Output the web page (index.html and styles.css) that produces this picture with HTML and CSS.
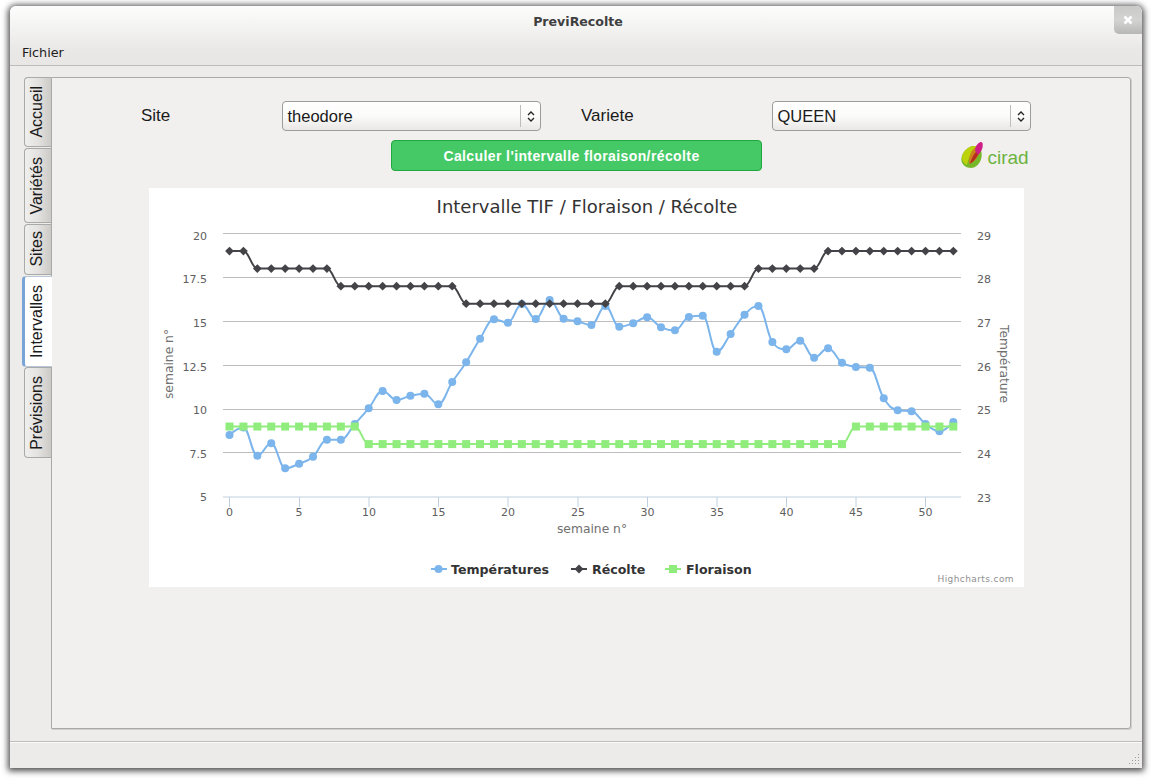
FILE: index.html
```html
<!DOCTYPE html>
<html lang="fr">
<head>
<meta charset="utf-8">
<title>PreviRecolte</title>
<link rel="stylesheet" href="styles.css">
</head>
<body>
<div class="window">
  <header class="head">
    <div class="title">PreviRecolte</div>
    <nav class="menu"><span>Fichier</span></nav>
    <button class="close" aria-label="Fermer"><svg width="12" height="12" viewBox="0 0 12 12"><path d="M2.5 2.5l7 7M9.5 2.5l-7 7" stroke="#fff" stroke-width="2.6" fill="none"/></svg></button>
  </header>
  <main class="main">
    <div class="tabs">
      <div class="tab"><span>Accueil</span></div>
      <div class="tab"><span>Variétés</span></div>
      <div class="tab tab-short"><span>Sites</span></div>
      <div class="tab active"><span>Intervalles</span></div>
      <div class="tab"><span>Prévisions</span></div>
    </div>
    <section class="panel">
      <div class="form-row">
        <label class="lbl">Site</label>
        <div class="combo"><span class="combo-text">theodore</span><span class="combo-arrow"><svg width="8" height="13" viewBox="0 0 8 13"><path d="M1 5l3-3 3 3M1 8l3 3 3-3" stroke="#222" stroke-width="1.3" fill="none"/></svg></span></div>
        <label class="lbl lbl-2">Variete</label>
        <div class="combo"><span class="combo-text">QUEEN</span><span class="combo-arrow"><svg width="8" height="13" viewBox="0 0 8 13"><path d="M1 5l3-3 3 3M1 8l3 3 3-3" stroke="#222" stroke-width="1.3" fill="none"/></svg></span></div>
      </div>
      <div class="action-row">
        <button class="calc">Calculer l'intervalle floraison/récolte</button>
        <svg class="logo" width="68" height="28" viewBox="0 0 68 28">
          <path d="M10 5.500C15 4 19 7 20.500 11C21.500 17 19 24 13 26.500C8 28 2 26 .5 20C-.5 14 4 8 10 5.500Z" fill="#76b82a"/>
          <path d="M10 5.500C13 4.500 15 5 16 6C12 10 7 17 6 24C2 22 0 18 1.500 14C3 10 6 7 10 5.500Z" fill="#bcd20a"/>
          <path d="M8 23C7 17 10 9 15 6C17 5.500 19 7 19 8C19 14 14 21 8 23Z" fill="#c9851c"/>
          <path d="M9 23C10 18 13 12 17 9C18 11 18 12 17 14C15 18 12 21 9 23Z" fill="#b5301f"/>
          <path d="M14 9C14.500 5 17 1.500 20 1C22 1 22 4 21.500 6.500C21 9 19 12 17 14C16 12 14.500 11 14 9Z" fill="#cf1d86"/>
          <text class="logo-text" x="26.500" y="23">cirad</text>
        </svg>
      </div>
      <figure class="chart">
        <svg width="875" height="399" viewBox="149 188 875 399">
          <defs>
            <marker id="m-circle" markerUnits="userSpaceOnUse" markerWidth="10" markerHeight="10" refX="5" refY="5"><circle cx="5" cy="5" r="4" fill="#7cb5ec"/></marker>
            <marker id="m-diamond" markerUnits="userSpaceOnUse" markerWidth="10" markerHeight="10" refX="5" refY="5"><path d="M5 .6L9.400 5 5 9.400 .6 5Z" fill="#434348"/></marker>
            <marker id="m-square" markerUnits="userSpaceOnUse" markerWidth="10" markerHeight="10" refX="5" refY="5"><rect x="1" y="1" width="8" height="8" fill="#90ed7d"/></marker>
          </defs>
          <rect class="bg" x="149" y="188" width="875" height="399"/>
          <text class="c-title" x="587" y="213">Intervalle TIF / Floraison / Récolte</text>
          <g class="grid">
            <path d="M223 233.500H961M223 277.500H961M223 321.500H961M223 365.500H961M223 409.500H961M223 452.500H961"/>
          </g>
          <path class="axis" d="M223 497H961M229.500 497v10M299.500 497v10M369 497v10M438.500 497v10M508 497v10M578 497v10M647.500 497v10M717 497v10M786.500 497v10M856 497v10M925.500 497v10"/>
          <g class="lab lab-l">
            <text x="207" y="240">20</text><text x="207" y="283">17.5</text><text x="207" y="327">15</text><text x="207" y="371">12.5</text><text x="207" y="414">10</text><text x="207" y="458">7.5</text><text x="207" y="501">5</text>
          </g>
          <g class="lab lab-r">
            <text x="977" y="240">29</text><text x="977" y="283">28</text><text x="977" y="327">27</text><text x="977" y="371">26</text><text x="977" y="414">25</text><text x="977" y="458">24</text><text x="977" y="502">23</text>
          </g>
          <g class="lab lab-x">
            <text x="229.500" y="516">0</text><text x="299" y="516">5</text><text x="369" y="516">10</text><text x="438.500" y="516">15</text><text x="508" y="516">20</text><text x="578" y="516">25</text><text x="647.500" y="516">30</text><text x="717" y="516">35</text><text x="786.500" y="516">40</text><text x="856" y="516">45</text><text x="925.500" y="516">50</text>
          </g>
          <text class="ax-t" x="592" y="533">semaine n°</text>
          <text class="ax-t" transform="translate(173 364) rotate(-90)">semaine n°</text>
          <text class="ax-t" transform="translate(1000 364) rotate(90)">Température</text>
          <path id="s-temp" class="line" stroke="#7cb5ec" marker-start="url(#m-circle)" marker-mid="url(#m-circle)" marker-end="url(#m-circle)"/>
          <path id="s-rec" class="line" stroke="#434348" marker-start="url(#m-diamond)" marker-mid="url(#m-diamond)" marker-end="url(#m-diamond)"/>
          <path id="s-flo" class="line" stroke="#90ed7d" marker-start="url(#m-square)" marker-mid="url(#m-square)" marker-end="url(#m-square)"/>
          <path class="leg" stroke="#7cb5ec" d="M431 569h16"/><circle cx="438.500" cy="569" r="4" fill="#7cb5ec"/>
          <text class="leg-t" x="451" y="574">Températures</text>
          <path class="leg" stroke="#434348" d="M571 569h16"/><path d="M579 564.500l4.500 4.500-4.500 4.500-4.500-4.500Z" fill="#434348"/>
          <text class="leg-t" x="592" y="574">Récolte</text>
          <path class="leg" stroke="#90ed7d" d="M665 569h16"/><rect x="669" y="565" width="8" height="8" fill="#90ed7d"/>
          <text class="leg-t" x="686" y="574">Floraison</text>
          <text class="credit" x="1014" y="582">Highcharts.com</text>
        </svg>
      </figure>
    </section>
  </main>
  <footer class="status">
    <svg width="12" height="12" viewBox="0 0 12 12" class="grip"><path d="M10 1h1v1h-1zM7 4h1v1H7zM10 4h1v1h-1zM4 7h1v1H4zM7 7h1v1H7zM10 7h1v1h-1zM1 10h1v1H1zM4 10h1v1H4zM7 10h1v1H7zM10 10h1v1h-1z" fill="#9a9a98"/></svg>
  </footer>
</div>
<script src="chart.js"></script>
</body>
</html>
```

FILE: styles.css
```css
* { box-sizing: border-box; }
html, body { margin: 0; height: 100%; background: #fff; overflow: hidden; }
body { padding: 6px 9px 11px 10px; font-family: "Liberation Sans", Arial, sans-serif; }

.window {
  position: relative;
  width: 1132px;
  height: 762px;
  display: flex;
  flex-direction: column;
  background: #edecea;
  border-radius: 6px 6px 0 0;
  box-shadow: 0 1px 6px 2px rgba(0, 0, 0, .7);
}

.head {
  height: 60px;
  flex: none;
  background: linear-gradient(#fdfdfd, #e9e8e6 75%, #e8e7e5);
  border-bottom: 1px solid #bdbdbb;
  border-radius: 6px 6px 0 0;
  font-family: "DejaVu Sans", sans-serif;
}
.title {
  height: 32px;
  padding: 8px 0 0 4px;
  text-align: center;
  font-size: 12.600px;
  line-height: 15px;
  font-weight: bold;
  color: #3f3f3f;
}
.menu { padding: 7px 0 0 12px; font-size: 12.800px; line-height: 15px; color: #1c1c1c; }
.close {
  position: absolute;
  top: 0;
  right: 0;
  width: 28px;
  height: 28px;
  padding: 0;
  border: 0;
  border-radius: 0 6px 0 5px;
  background: linear-gradient(#c9c9c8, #d3d3d2 50%, #b7b7b6);
  display: flex;
  align-items: center;
  justify-content: center;
}

.main {
  flex: 1;
  display: flex;
  padding: 11px 11px 12px 12px;
  min-height: 0;
  border-bottom: 1px solid #bdbdbb;
}

.tabs { width: 29px; flex: none; display: flex; flex-direction: column; gap: 1px; position: relative; z-index: 1; }
.tab {
  margin-left: 2px;
  padding: 8px 2px 8px 0;
  display: flex;
  justify-content: center;
  background: linear-gradient(90deg, #efefed, #e3e2e0 50%, #cbcac6);
  border: 1px solid #a9a9a7;
  border-right: 0;
  border-radius: 4px 0 0 4px;
  font-size: 16px;
  color: #1a1a1a;
}
.tab-short { padding-top: 6px; padding-bottom: 7px; }
.tab span { writing-mode: vertical-rl; transform: rotate(180deg); line-height: 24px; }
.tab.active {
  margin: 0 -1px -1px 0;
  padding-right: 4px;
  background: #fff;
  border-color: #7aa3d6;
  border-left-width: 3px;
  border-top-color: #b8c7da;
  border-bottom-color: #b8c7da;
}

.panel {
  flex: 1;
  min-width: 0;
  background: #f1f0ee;
  border: 1px solid #a9a9a7;
  border-radius: 0 3px 3px 0;
  box-shadow: 1px 1px 0 #d0cfcd;
}

.form-row {
  margin: 23px 0 0 89px;
  display: grid;
  grid-template-columns: 141px 259px 231px 259px;
  height: 29px;
}
.lbl { font-size: 17px; line-height: 30px; color: #1a1a1a; }
.lbl-2 { padding-left: 40px; }
.combo {
  display: flex;
  align-items: center;
  border: 1px solid #9c9c9a;
  border-radius: 4px;
  background: linear-gradient(#fff, #fbfbfa 50%, #e9e8e6);
  font-size: 16.500px;
  color: #1a1a1a;
}
.combo-text { flex: 1; padding: 1px 0 0 4.500px; }
.combo-arrow {
  width: 20px;
  height: 22px;
  border-left: 1px solid #bdbdbb;
  display: flex;
  align-items: center;
  justify-content: center;
}

.action-row { margin: 10px 0 0 339px; display: flex; align-items: flex-start; height: 31px; }
.calc {
  width: 371px;
  height: 31px;
  padding: 0 10px 0 0;
  border: 1px solid #1fa83f;
  border-radius: 4px;
  background: #45c967;
  color: #fff;
  font: bold 14px "Liberation Sans", Arial, sans-serif;
  letter-spacing: .4px;
}
.logo { margin: 1px 0 0 199px; flex: none; overflow: visible; }
.logo-text { font: 19px "Liberation Sans", Arial, sans-serif; fill: #6cb33f; }

.chart { margin: 17px 0 0 97px; width: 875px; height: 399px; }
.chart svg { display: block; }
.bg { fill: #fff; }
.grid path { stroke: #bdbdbd; stroke-width: 1; fill: none; }
.axis { stroke: #c0d0e0; stroke-width: 1; fill: none; }
.c-title, .lab, .ax-t, .leg-t, .credit { font-family: "DejaVu Sans", sans-serif; }
.c-title { font-size: 18px; fill: #333; text-anchor: middle; }
.lab { font-size: 11px; fill: #606060; }
.lab-l { text-anchor: end; }
.lab-x { text-anchor: middle; }
.ax-t { font-size: 12.300px; fill: #707070; text-anchor: middle; }
.line { fill: none; stroke-width: 2; stroke-linejoin: round; stroke-linecap: round; }
.leg { stroke-width: 2; fill: none; }
.leg-t { font-size: 12.600px; font-weight: bold; fill: #333; }
.credit { font-size: 9px; fill: #909090; text-anchor: end; letter-spacing: .4px; }

.status { height: 26px; flex: none; display: flex; justify-content: flex-end; align-items: flex-end; padding: 0 2px 3px 0; background: #ecebe9; border-top: 1px solid #fbfbfa; }
```

FILE: chart.js
```js
// Series as plotted, in chart pixels (temperature read on the right axis).
var temp = [435,427.5,455.7,443.3,468.3,463.7,456.7,439.7,439.7,424,408.3,391,400,395.7,393.7,404.3,382,362.3,338.7,319.3,322.7,304,319,300,318.7,321.3,325,306,326.7,323.3,317.3,327.3,330.3,317,315.7,351.7,334,314.7,306,342,349.3,340.7,357.7,348.3,362.7,367,367.7,398.3,410.3,411.3,424,431.3,422];

function fill(parts) {
  var out = [];
  parts.forEach(function (p) { for (var i = 0; i < p[1]; i++) out.push(p[0]); });
  return out;
}
function wy(v) { return 233.5 + (20 - v) * 17.55; }

var rec = fill([[19, 2], [18, 6], [17, 9], [16, 11], [17, 10], [18, 5], [19, 10]]).map(wy);
var flo = fill([[9, 10], [8, 35], [9, 8]]).map(wy);

function xAt(i) { return 229.5 + 13.92 * i; }

// Spline through the points: control points 40% towards each neighbour,
// shifted so the tangent stays straight and clamped so peaks don't overshoot.
function spline(ys) {
  var n = ys.length, L = [], R = [];
  for (var i = 0; i < n; i++) {
    if (i === 0 || i === n - 1) {
      L.push([xAt(i), ys[i]]);
      R.push([xAt(i), ys[i]]);
      continue;
    }
    var x = xAt(i), y = ys[i], lx = xAt(i - 1), ly = ys[i - 1], nx = xAt(i + 1), ny = ys[i + 1];
    var lcx = (1.5 * x + lx) / 2.5, lcy = (1.5 * y + ly) / 2.5;
    var rcx = (1.5 * x + nx) / 2.5, rcy = (1.5 * y + ny) / 2.5;
    var c = ((rcy - lcy) * (rcx - x)) / (rcx - lcx) + y - rcy;
    lcy += c; rcy += c;
    if (lcy > ly && lcy > y) { lcy = Math.max(ly, y); rcy = 2 * y - lcy; }
    else if (lcy < ly && lcy < y) { lcy = Math.min(ly, y); rcy = 2 * y - lcy; }
    if (rcy > ny && rcy > y) { rcy = Math.max(ny, y); lcy = 2 * y - rcy; }
    else if (rcy < ny && rcy < y) { rcy = Math.min(ny, y); lcy = 2 * y - rcy; }
    L.push([lcx, lcy]);
    R.push([rcx, rcy]);
  }
  var d = "M" + xAt(0) + " " + ys[0];
  for (var j = 1; j < n; j++) {
    d += "C" + R[j - 1][0] + " " + R[j - 1][1] + " " + L[j][0] + " " + L[j][1] + " " + xAt(j) + " " + ys[j];
  }
  return d;
}

document.getElementById("s-temp").setAttribute("d", spline(temp));
document.getElementById("s-rec").setAttribute("d", spline(rec));
document.getElementById("s-flo").setAttribute("d", spline(flo));
```
